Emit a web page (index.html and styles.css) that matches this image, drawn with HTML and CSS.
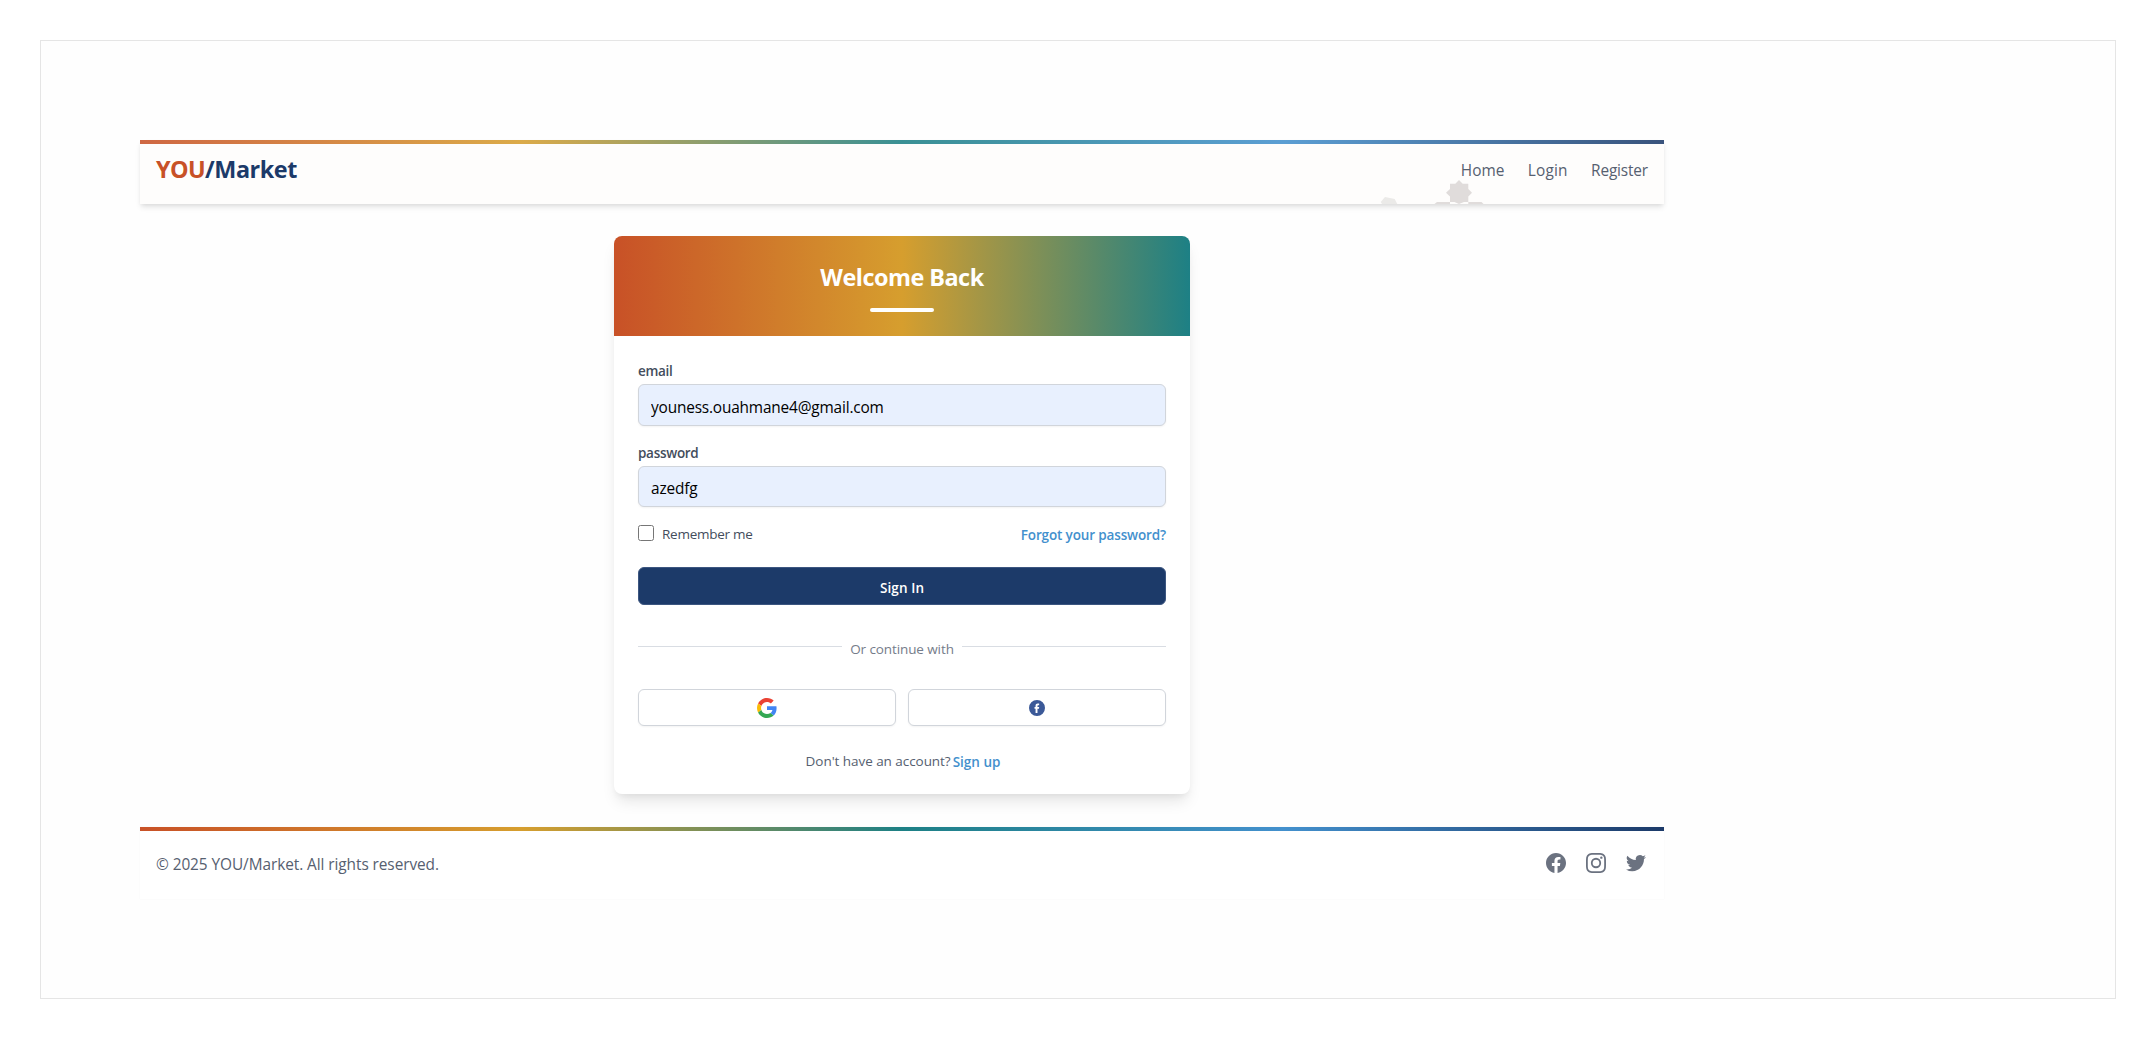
FILE: index.html
```html
<!DOCTYPE html>
<html lang="en">
<head>
<meta charset="utf-8">
<title>YOU/Market - Login</title>
<link rel="stylesheet" href="styles.css">
</head>
<body>
<div class="frame">
<div class="page">
  <header class="site-header">
    <div class="stripe"></div>
    <svg class="ornament" width="110" height="24" viewBox="0 0 110 24">
      <path fill="#ebeae8" d="M.7 22 5 17l9.700 2L17.300 24H2z"/>
      <path fill="#e0dcdb" d="M79 0l3.700 3.700H88.300V9L92 12.700 88.300 16.500V22H84L79 24 74.500 22H70V16.500L66 12.700 70 9V3.700h5.300zM57 22H70v2H54.500zM88.300 22H101.500L103.500 24H88.300z"/>
    </svg>
    <div class="bar">
      <a class="brand"><span class="you">YOU</span>/Market</a>
      <nav class="nav"><a>Home</a><a class="login">Login</a><a class="register">Register</a></nav>
    </div>
  </header>

  <main class="card">
    <div class="card-head"><h1>Welcome Back</h1><div class="underline"></div></div>
    <form class="card-body">
      <label for="email">email</label>
      <input class="field" id="email" type="text" value="youness.ouahmane4@gmail.com">
      <label for="password">password</label>
      <input class="field" id="password" type="text" value="azedfg">
      <div class="options">
        <span class="remember"><span class="check"></span><span class="remember-text">Remember me</span></span>
        <a class="link forgot">Forgot your password?</a>
      </div>
      <button type="button" class="submit">Sign In</button>
      <div class="divider"><span>Or continue with</span></div>
      <div class="social">
        <button type="button" class="social-btn">
          <svg width="20" height="20" viewBox="0 0 48 48"><path fill="#EA4335" d="M24 9.500c3.540 0 6.710 1.220 9.210 3.600l6.850-6.850C35.900 2.380 30.470 0 24 0 14.620 0 6.510 5.380 2.560 13.220l7.980 6.190C12.430 13.720 17.740 9.500 24 9.500z"/><path fill="#4285F4" d="M46.980 24.550c0-1.570-.15-3.090-.38-4.550H24v9.020h12.940c-.58 2.960-2.260 5.480-4.780 7.180l7.730 6c4.510-4.180 7.090-10.360 7.090-17.650z"/><path fill="#FBBC05" d="M10.530 28.590c-.48-1.450-.76-2.990-.76-4.590s.27-3.140.76-4.590l-7.980-6.190C.92 16.460 0 20.120 0 24c0 3.880.92 7.540 2.560 10.780l7.970-6.190z"/><path fill="#34A853" d="M24 48c6.480 0 11.930-2.130 15.890-5.810l-7.730-6c-2.150 1.450-4.920 2.300-8.160 2.300-6.260 0-11.570-4.220-13.470-9.910l-7.980 6.190C6.510 42.620 14.620 48 24 48z"/></svg>
        </button>
        <button type="button" class="social-btn">
          <svg width="16" height="16" viewBox="0 0 20 20"><path fill="#3b5998" fill-rule="evenodd" d="M10 0a10 10 0 1 0 0 20 10 10 0 0 0 0-20zm2.700 6.500h-1.200c-.7 0-.9.300-.9.900v1.300h2.100l-.25 2.200h-1.850v5.400H8.200v-5.400H6.900V8.700h1.300V7.100C8.200 5.200 9.300 4.300 11 4.300c.8 0 1.400.05 1.700.1z"/></svg>
        </button>
      </div>
      <p class="signup"><span>Don't have an account?</span><a class="link">Sign up</a></p>
    </form>
  </main>

  <footer class="site-footer">
    <div class="stripe"></div>
    <div class="foot">
      <p>© 2025 YOU/Market. All rights reserved.</p>
      <div class="foot-icons">
        <svg width="24" height="24" viewBox="0 0 24 24"><path d="M22 12c0-5.523-4.477-10-10-10S2 6.477 2 12c0 4.991 3.657 9.128 8.438 9.878v-6.987h-2.540V12h2.540V9.797c0-2.506 1.492-3.890 3.777-3.890 1.094 0 2.238.195 2.238.195v2.460h-1.260c-1.243 0-1.630.771-1.630 1.562V12h2.773l-.443 2.890h-2.330v6.988C18.343 21.128 22 16.991 22 12z"/></svg>
        <svg width="24" height="24" viewBox="0 0 24 24"><path fill-rule="evenodd" d="M12.315 2c2.430 0 2.784.013 3.808.060 1.064.049 1.791.218 2.427.465a4.902 4.902 0 011.772 1.153 4.902 4.902 0 011.153 1.772c.247.636.416 1.363.465 2.427.048 1.067.060 1.407.060 4.123v.080c0 2.643-.012 2.987-.060 4.043-.049 1.064-.218 1.791-.465 2.427a4.902 4.902 0 01-1.153 1.772 4.902 4.902 0 01-1.772 1.153c-.636.247-1.363.416-2.427.465-1.067.048-1.407.060-4.123.060h-.080c-2.643 0-2.987-.012-4.043-.060-1.064-.049-1.791-.218-2.427-.465a4.902 4.902 0 01-1.772-1.153 4.902 4.902 0 01-1.153-1.772c-.247-.636-.416-1.363-.465-2.427-.047-1.024-.060-1.379-.060-3.808v-.630c0-2.430.013-2.784.060-3.808.049-1.064.218-1.791.465-2.427a4.902 4.902 0 011.153-1.772A4.902 4.902 0 015.450 2.525c.636-.247 1.363-.416 2.427-.465C8.901 2.013 9.256 2 11.685 2h.630zm-.081 1.802h-.468c-2.456 0-2.784.011-3.807.058-.975.045-1.504.207-1.857.344-.467.182-.8.398-1.150.748-.350.350-.566.683-.748 1.150-.137.353-.300.882-.344 1.857-.047 1.023-.058 1.351-.058 3.807v.468c0 2.456.011 2.784.058 3.807.045.975.207 1.504.344 1.857.182.466.399.800.748 1.150.350.350.683.566 1.150.748.353.137.882.300 1.857.344 1.054.048 1.370.058 4.041.058h.080c2.597 0 2.917-.010 3.960-.058.976-.045 1.505-.207 1.858-.344.466-.182.800-.398 1.150-.748.350-.350.566-.683.748-1.150.137-.353.300-.882.344-1.857.048-1.055.058-1.370.058-4.041v-.080c0-2.597-.010-2.917-.058-3.960-.045-.976-.207-1.505-.344-1.858a3.097 3.097 0 00-.748-1.150 3.098 3.098 0 00-1.150-.748c-.353-.137-.882-.300-1.857-.344-1.023-.047-1.351-.058-3.807-.058zM12 6.865a5.135 5.135 0 110 10.270 5.135 5.135 0 010-10.270zm0 1.802a3.333 3.333 0 100 6.666 3.333 3.333 0 000-6.666zm5.338-3.205a1.200 1.200 0 110 2.400 1.200 1.200 0 010-2.400z"/></svg>
        <svg width="24" height="24" viewBox="0 0 24 24"><path d="M8.290 20.251c7.547 0 11.675-6.253 11.675-11.675 0-.178 0-.355-.012-.530A8.348 8.348 0 0022 5.920a8.190 8.190 0 01-2.357.646 4.118 4.118 0 001.804-2.270 8.224 8.224 0 01-2.605.996 4.107 4.107 0 00-6.993 3.743 11.650 11.650 0 01-8.457-4.287 4.106 4.106 0 001.270 5.477A4.072 4.072 0 012.800 9.713v.052a4.105 4.105 0 003.292 4.022 4.095 4.095 0 01-1.853.070 4.108 4.108 0 003.834 2.850A8.233 8.233 0 012 18.407a11.616 11.616 0 006.290 1.840"/></svg>
      </div>
    </div>
  </footer>
</div>
</div>
</body>
</html>
```
FILE: styles.css
```css
* { box-sizing: border-box; }

body {
  margin: 0;
  padding: 40px;
  background: #fff;
  color: #566070;
  font-family: "Open Sans", "Noto Sans", sans-serif;
  font-size: 15.4px;
}

h1, p { margin: 0; }

.frame {
  width: 2076px;
  height: 959px;
  padding: 99px;
  border: 1px solid #e5e5e5;
  background: #fefefe;
}

.page { width: 1524px; }

.stripe {
  height: 4px;
  background: linear-gradient(to right, #c85127, #d69e2e, #1d8085, #4390cd, #1c3a69);
}

/* Header */
.site-header {
  position: relative;
  height: 64px;
  background: #fefdfc;
  box-shadow: 0 4px 6px -1px rgba(0, 0, 0, .1), 0 2px 4px -1px rgba(0, 0, 0, .06);
}
.site-header .stripe { opacity: .87; }
.ornament { position: absolute; left: 1240px; bottom: 0; }
.bar {
  position: relative;
  display: flex;
  align-items: center;
  justify-content: space-between;
  height: 50px;
  padding: 0 16px;
}
.brand {
  font-size: 23.4px;
  font-weight: 700;
  letter-spacing: -.45px;
  color: #1c3a69;
}
.you { color: #c85127; letter-spacing: -.6px; }
.nav { display: flex; gap: 23.500px; padding-top: 2px; }
.login { letter-spacing: .15px; }
.register { letter-spacing: -.15px; }

/* Login card */
.card {
  width: 576px;
  height: 558px;
  margin: 32px auto 0;
  overflow: hidden;
  border-radius: 8px;
  background: #fff;
  box-shadow: 0 10px 15px -3px rgba(0, 0, 0, .1), 0 4px 6px -2px rgba(0, 0, 0, .05);
}
.card-head {
  display: flex;
  flex-direction: column;
  align-items: center;
  height: 100px;
  padding-top: 25px;
  background: linear-gradient(to right, #c85127, #d69e2e, #1d8085);
  color: #fff;
}
h1 {
  font-size: 23.4px;
  font-weight: 700;
  line-height: 32px;
  letter-spacing: -.5px;
}
.underline {
  width: 64px;
  height: 4px;
  margin-top: 15px;
  border-radius: 2px;
  background: #fff;
}
.card-body {
  display: flex;
  flex-direction: column;
  padding: 25px 24px 0;
  font-size: 13.5px;
  line-height: 20px;
}
label {
  margin-bottom: 3px;
  font-weight: 600;
  letter-spacing: -.3px;
  color: #434d5c;
}
.field {
  height: 42px;
  margin: 0 0 17px;
  padding: 4px 12px 0;
  border: 1px solid #d1d5db;
  border-radius: 6px;
  background: #e8f0fe;
  box-shadow: 0 1px 2px rgba(0, 0, 0, .05);
  color: #000;
  font: 15.4px "Open Sans", sans-serif;
  letter-spacing: -.17px;
}
#password { height: 41px; padding-top: 3px; margin-bottom: 17px; }
.options {
  display: flex;
  align-items: center;
  justify-content: space-between;
  height: 20px;
}
.remember { display: flex; align-items: center; gap: 8px; letter-spacing: -.25px; color: #434d5c; }
.check {
  width: 16px;
  height: 16px;
  margin-bottom: 2px;
  border: 1px solid #767676;
  border-radius: 2.500px;
  background: #fff;
}
.link { font-weight: 600; color: #4390cd; }
.forgot { padding-top: 1px; letter-spacing: -.14px; }
.submit {
  height: 38px;
  margin-top: 23px;
  padding: 3px 0 0;
  border: 1px solid #3c5680;
  border-radius: 6px;
  background: #1c3a69;
  color: #fff;
  font: 600 13.500px "Open Sans", sans-serif;
  letter-spacing: .1px;
}
.divider {
  display: flex;
  align-items: center;
  gap: 8px;
  height: 20px;
  margin-top: 31px;
  color: #757c8a;
  letter-spacing: -.1px;
}
.divider::before, .divider::after { content: ""; flex: 1; height: 1px; background: #d9dde3; }
.divider span { padding-top: 5px; }
.social {
  display: grid;
  grid-template-columns: 1fr 1fr;
  gap: 12px;
  margin-top: 33px;
}
.social-btn {
  display: flex;
  align-items: center;
  justify-content: center;
  height: 37px;
  padding: 0;
  border: 1px solid #d1d5db;
  border-radius: 6px;
  background: #fff;
  box-shadow: 0 1px 2px rgba(0, 0, 0, .05);
}
.signup {
  display: flex;
  justify-content: center;
  gap: 2px;
  margin-top: 25px;
  padding-left: 2px;
  letter-spacing: -.05px;
}
.signup .link { padding-top: 1px; letter-spacing: 0; }

/* Footer */
.site-footer {
  height: 72px;
  margin-top: 33px;
  background: #fff;
  box-shadow: 0 0 1px rgba(0, 0, 0, .05);
}
.foot {
  display: flex;
  align-items: center;
  justify-content: space-between;
  height: 66px;
  padding: 0 16px;
  letter-spacing: -.07px;
}
.foot-icons { display: flex; gap: 16px; padding-bottom: 2px; }
.foot-icons svg { fill: #6b7280; }
```
